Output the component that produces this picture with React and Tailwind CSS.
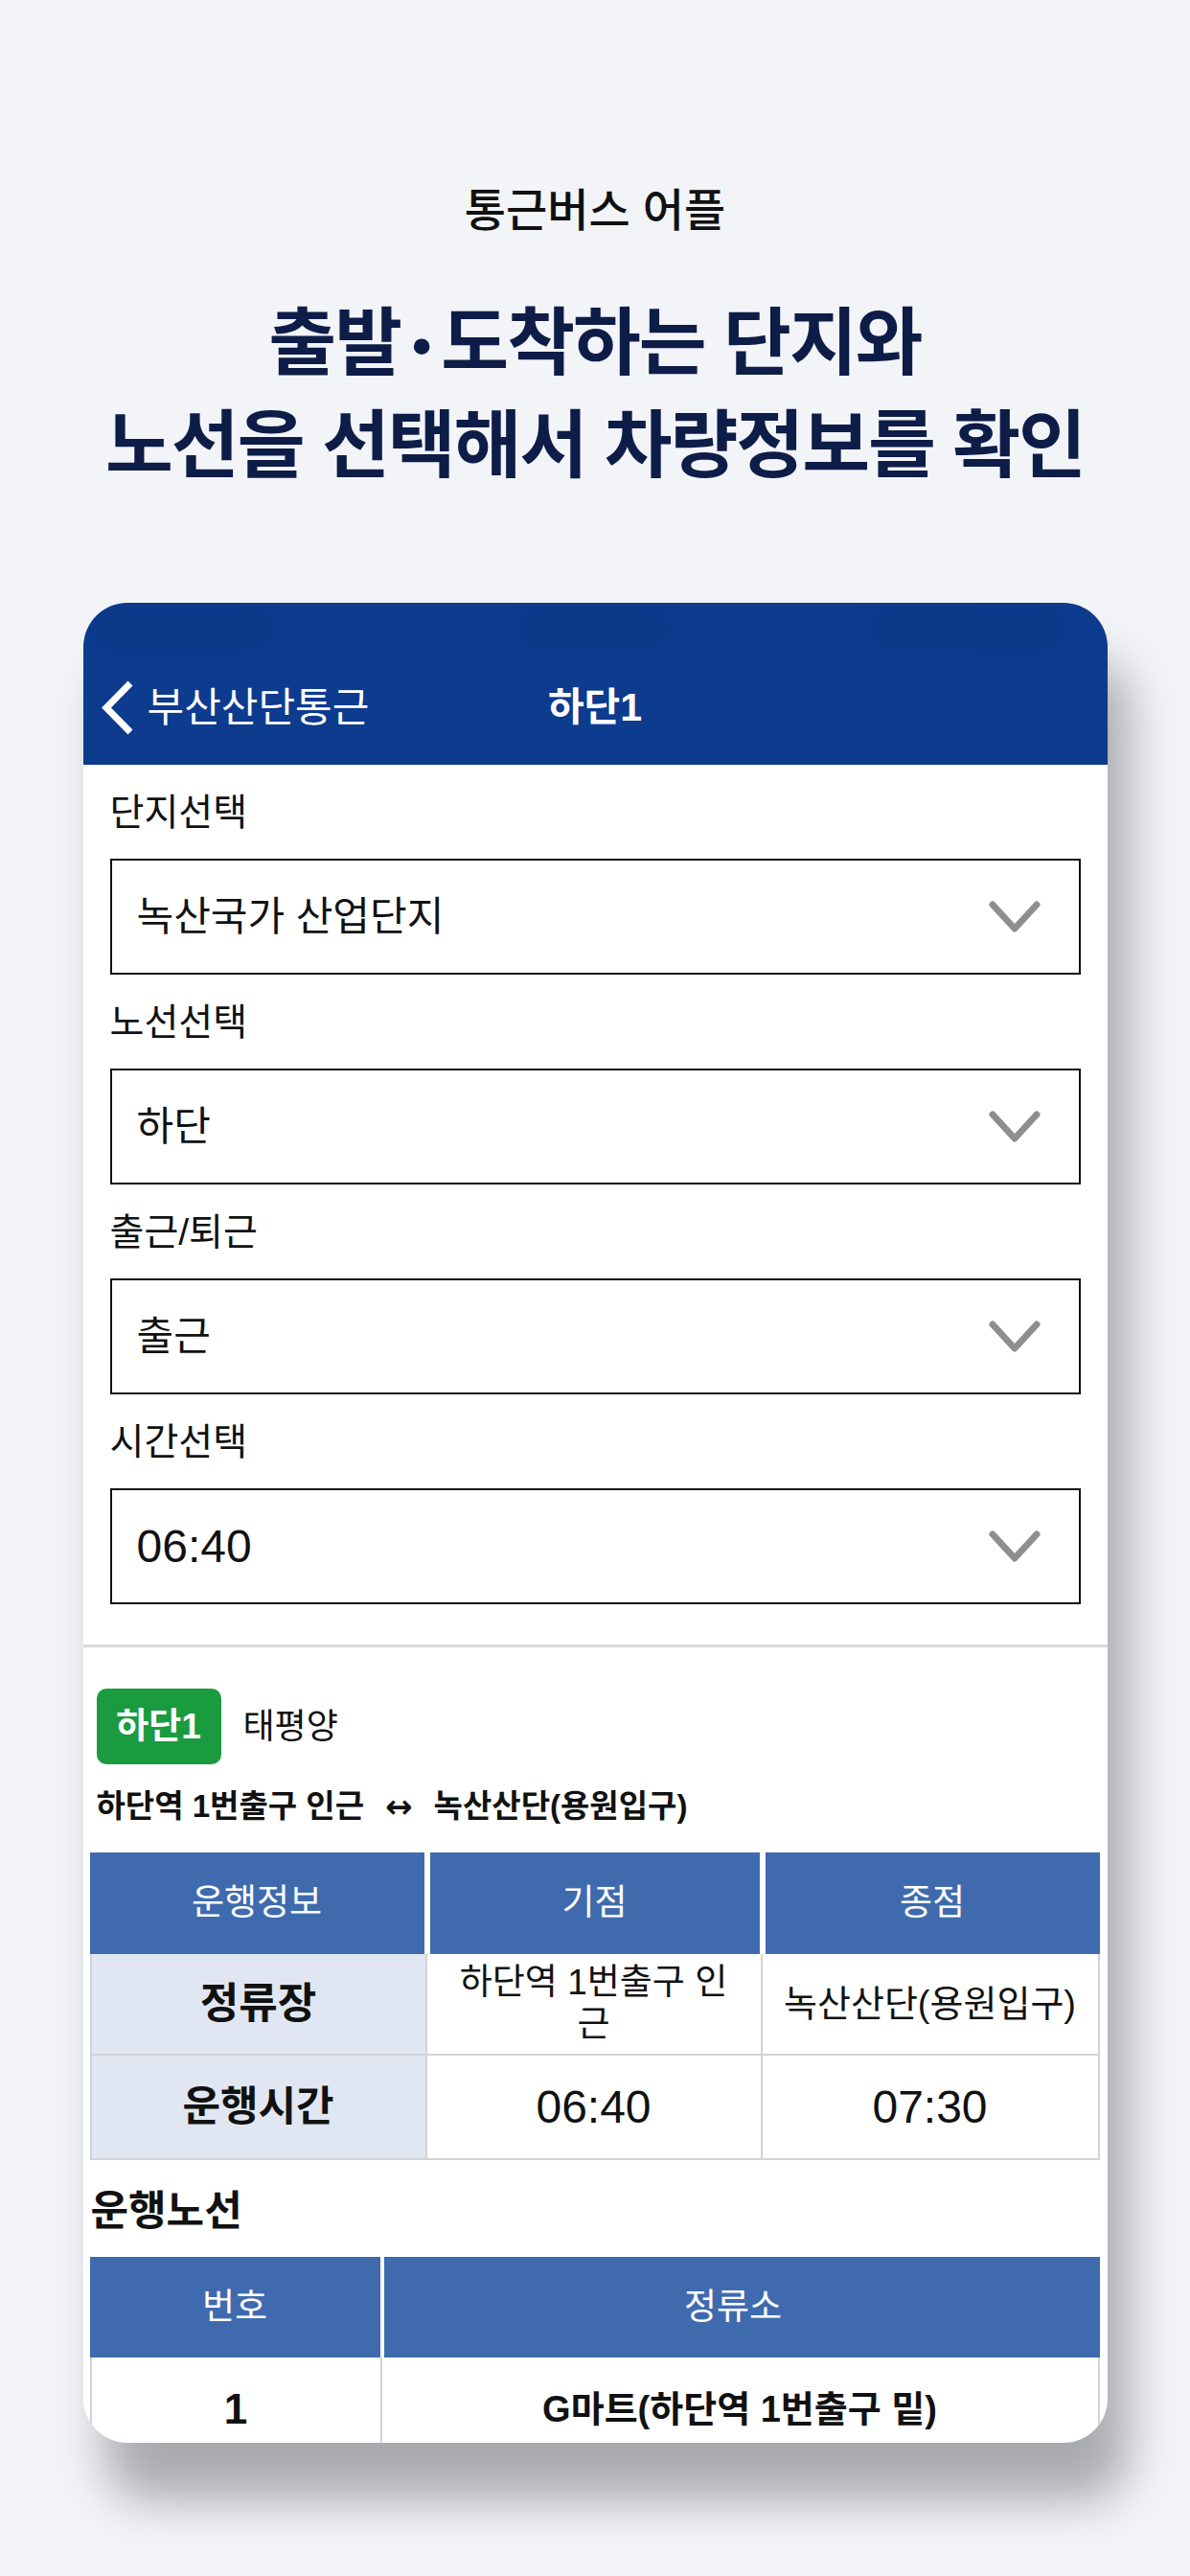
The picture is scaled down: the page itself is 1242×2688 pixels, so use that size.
import React from "react";

const Chevron = () => (
  <svg width="54" height="34" viewBox="0 0 54 34" fill="none">
    <path d="M4 4 L27 29 L50 4" stroke="#8e8e8e" strokeWidth="7" strokeLinecap="round" strokeLinejoin="round" />
  </svg>
);

const BackIcon = () => (
  <svg width="37" height="57" viewBox="0 0 37 57" fill="none">
    <path d="M32 3 L7 28.5 L32 54" stroke="#ffffff" strokeWidth="7" strokeLinecap="butt" strokeLinejoin="miter" />
  </svg>
);

function SelectGroup({ label, value, first, numeric }) {
  return (
    <div className={first ? "" : "mt-[22px]"}>
      <div className="h-[56px] flex items-center text-[39px] text-[#111]">{label}</div>
      <div className="mt-[20px] h-[121px] border-2 border-[#111] flex items-center justify-between pl-[26px] pr-[40px]">
        <span className={numeric ? "text-[48px] text-[#111]" : "text-[42px] text-[#111]"}>{value}</span>
        <Chevron />
      </div>
    </div>
  );
}

export default function App() {
  return (
    <div className="min-h-[2688px] bg-[#f2f4f8] flex flex-col items-center pt-[190px] [font-family:'Liberation_Sans','Noto_Sans_CJK_KR',sans-serif]">
      <div className="h-[60px] leading-[60px] text-[47px] font-medium text-[#111]">통근버스 어플</div>
      <div className="mt-[55px] text-center text-[77px] leading-[107px] font-bold tracking-[-2px] text-[#0e1d48] whitespace-nowrap">
        <div>
          출발<span className="mx-[12px] text-[58px] leading-[0] align-[4px] [font-family:'Liberation_Sans',sans-serif]">•</span>도착하는 단지와
        </div>
        <div>노선을 선택해서 차량정보를 확인</div>
      </div>

      <div className="mt-[110px] w-[1069px] h-[1920px] rounded-[46px] overflow-hidden bg-white shadow-[22px_60px_50px_rgba(0,0,0,0.3)] flex flex-col">
        {/* header */}
        <div className="bg-[#0d3b8e] h-[169px] flex flex-col shrink-0">
          <div className="h-[50px] flex items-start pt-[6px] pl-[14px]">
            <div className="w-[182px] h-[40px] rounded-[20px] bg-[#0a3278] opacity-30 blur-[8px]" />
            <div className="ml-[260px] w-[154px] h-[40px] rounded-[20px] bg-[#0a3278] opacity-30 blur-[8px]" />
            <div className="ml-[211px] w-[197px] h-[40px] rounded-[20px] bg-[#0a3278] opacity-30 blur-[8px]" />
          </div>
          <div className="h-[119px] grid grid-cols-[1fr_auto_1fr] items-center">
            <div className="flex items-center pl-[17px] gap-[13px]">
              <BackIcon />
              <span className="text-[42px] text-white">부산산단통근</span>
            </div>
            <div className="text-[41px] font-semibold text-white">하단1</div>
            <div />
          </div>
        </div>

        {/* form */}
        <div className="px-[28px] pt-[22px] pb-[42px] shrink-0">
          <SelectGroup first label="단지선택" value="녹산국가 산업단지" />
          <SelectGroup label="노선선택" value="하단" />
          <SelectGroup label="출근/퇴근" value="출근" />
          <SelectGroup label="시간선택" value="06:40" numeric />
        </div>
        <div className="h-[3px] bg-[#d9d9d9] shrink-0" />

        {/* info */}
        <div className="pt-[43px] shrink-0">
          <div className="flex items-center pl-[14px] gap-[23px]">
            <div className="w-[130px] h-[79px] rounded-[10px] bg-[#1a9b40] text-white text-[37px] font-bold flex items-center justify-center">
              하단1
            </div>
            <span className="text-[36px] text-[#111]">태평양</span>
          </div>
          <div className="mt-[24px] h-[40px] leading-[40px] pl-[14px] text-[33px] font-bold text-[#111] whitespace-nowrap flex items-center">
            <span>하단역 1번출구 인근</span>
            <span className="mx-[22px] text-[34px] font-bold [font-family:'DejaVu_Sans',sans-serif]">↔</span>
            <span>녹산산단(용원입구)</span>
          </div>

          {/* table 1 */}
          <div className="mt-[28px] ml-[7px] w-[1054px]">
            <div className="grid grid-cols-[352px_350px_352px] h-[106px] text-white text-[37px]">
              <div className="bg-[#3f6bae] mr-[3px] flex items-center justify-center">운행정보</div>
              <div className="bg-[#3f6bae] mx-[3px] flex items-center justify-center">기점</div>
              <div className="bg-[#3f6bae] ml-[3px] flex items-center justify-center">종점</div>
            </div>
            <div className="grid grid-cols-[352px_350px_352px] text-[#111]">
              <div className="h-[106px] bg-[#e1e7f2] border-l-2 border-r-2 border-b-2 border-[#d3d3d3] flex items-center justify-center text-[44px] font-bold">정류장</div>
              <div className="h-[106px] border-r-2 border-b-2 border-[#d3d3d3] flex items-center justify-center text-center text-[37px] leading-[44px] whitespace-nowrap">
                <span>하단역 1번출구 인<br />근</span>
              </div>
              <div className="h-[106px] border-r-2 border-b-2 border-[#d3d3d3] flex items-center justify-center text-[38px] whitespace-nowrap">녹산산단(용원입구)</div>
              <div className="h-[109px] bg-[#e1e7f2] border-l-2 border-r-2 border-b-2 border-[#d3d3d3] flex items-center justify-center text-[43px] font-bold">운행시간</div>
              <div className="h-[109px] border-r-2 border-b-2 border-[#d3d3d3] flex items-center justify-center text-[48px]">06:40</div>
              <div className="h-[109px] border-r-2 border-b-2 border-[#d3d3d3] flex items-center justify-center text-[48px]">07:30</div>
            </div>
          </div>

          <div className="mt-[28px] h-[50px] leading-[50px] pl-[8px] text-[43px] font-bold text-[#111]">운행노선</div>

          {/* table 2 */}
          <div className="mt-[23px] ml-[7px] w-[1054px]">
            <div className="grid grid-cols-[305px_749px] h-[105px] text-white text-[37px]">
              <div className="bg-[#3f6bae] mr-[2px] flex items-center justify-center">번호</div>
              <div className="bg-[#3f6bae] ml-[2px] flex items-center justify-center pr-[18px]">정류소</div>
            </div>
            <div className="grid grid-cols-[305px_749px] text-[#111]">
              <div className="h-[110px] border-l-2 border-r-2 border-b-2 border-[#d3d3d3] flex items-center justify-center text-[44px] font-bold">1</div>
              <div className="h-[110px] border-r-2 border-b-2 border-[#d3d3d3] flex items-center justify-center text-[38px] font-bold whitespace-nowrap">G마트(하단역 1번출구 밑)</div>
            </div>
          </div>
        </div>
      </div>
    </div>
  );
}
